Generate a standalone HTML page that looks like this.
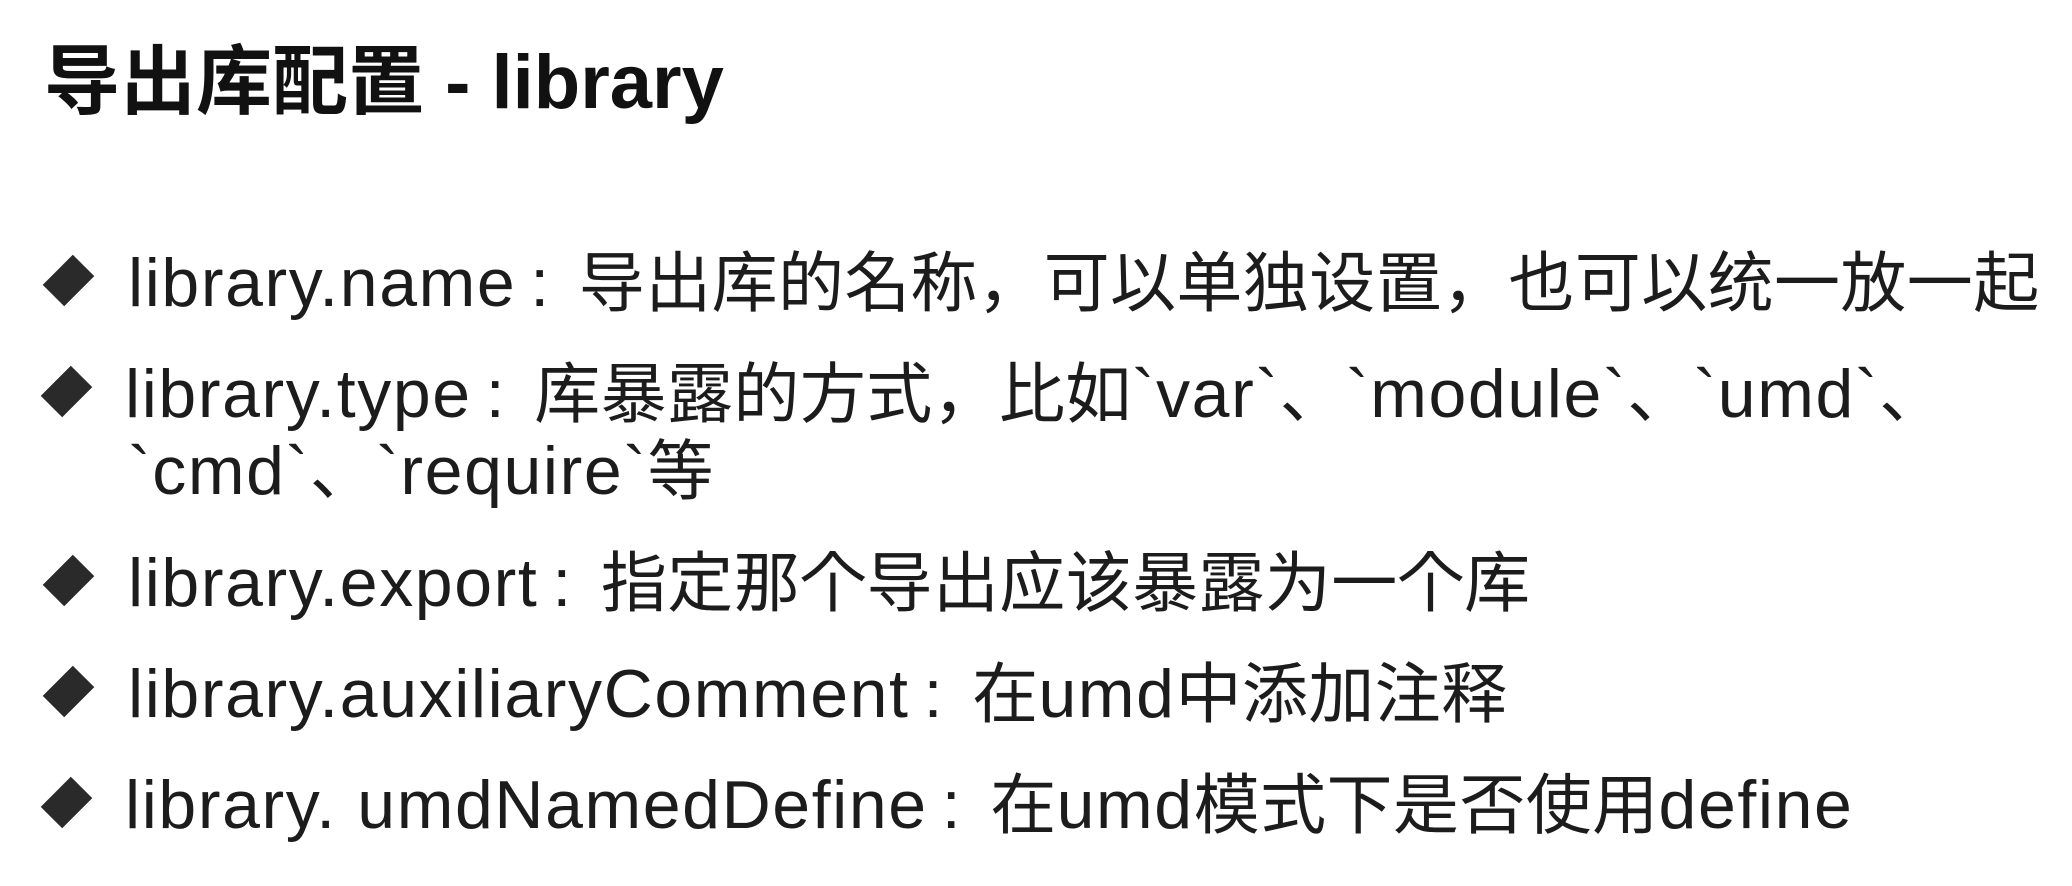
<!DOCTYPE html>
<html><head><meta charset="utf-8"><style>
html,body{margin:0;padding:0;background:#fff;}
body{width:2072px;height:886px;position:relative;overflow:hidden;color:#1c1c1c;font-family:"Liberation Sans","Noto Sans CJK JP",sans-serif;}
.t{position:absolute;left:44px;top:38px;font-size:76px;font-weight:bold;line-height:90px;white-space:nowrap;color:#111;}
.l{position:absolute;white-space:nowrap;font-size:68px;line-height:80px;letter-spacing:1.6px;}
.c{font-size:66px;letter-spacing:0.4px;}
.k{margin-left:14px;margin-right:28px;font-size:68px;}
.d{position:absolute;left:44px;width:37px;height:37px;background:#2a2a2a;transform:rotate(45deg) scale(0.82,1.15);}
</style></head><body>
<div class="t">导出库配置 - library</div>

<div class="d" style="top:262px;left:50px"></div>
<div class="l" style="left:128px;top:243px">library.name<span class="k">:</span><span class="c">导出库的名称，可以单独设置，也可以统一放一起</span></div>

<div class="d" style="top:373px;left:48px"></div>
<div class="l" style="left:125px;top:354px">library.type<span class="k">:</span><span class="c">库暴露的方式，比如</span>`var`<span class="c">、</span>`module`<span class="c">、</span>`umd`<span class="c">、</span></div>
<div class="l" style="left:128px;top:431px">`cmd`<span class="c">、</span>`require`<span class="c">等</span></div>

<div class="d" style="top:562px;left:50px"></div>
<div class="l" style="left:128px;top:543px">library.export<span class="k">:</span><span class="c">指定那个导出应该暴露为一个库</span></div>

<div class="d" style="top:673px;left:50px"></div>
<div class="l" style="left:128px;top:654px">library.auxiliaryComment<span class="k">:</span><span class="c">在</span>umd<span class="c">中添加注释</span></div>

<div class="d" style="top:784px;left:48px"></div>
<div class="l" style="left:125px;top:765px">library. umdNamedDefine<span class="k">:</span><span class="c">在</span>umd<span class="c">模式下是否使用</span>define</div>
</body></html>
